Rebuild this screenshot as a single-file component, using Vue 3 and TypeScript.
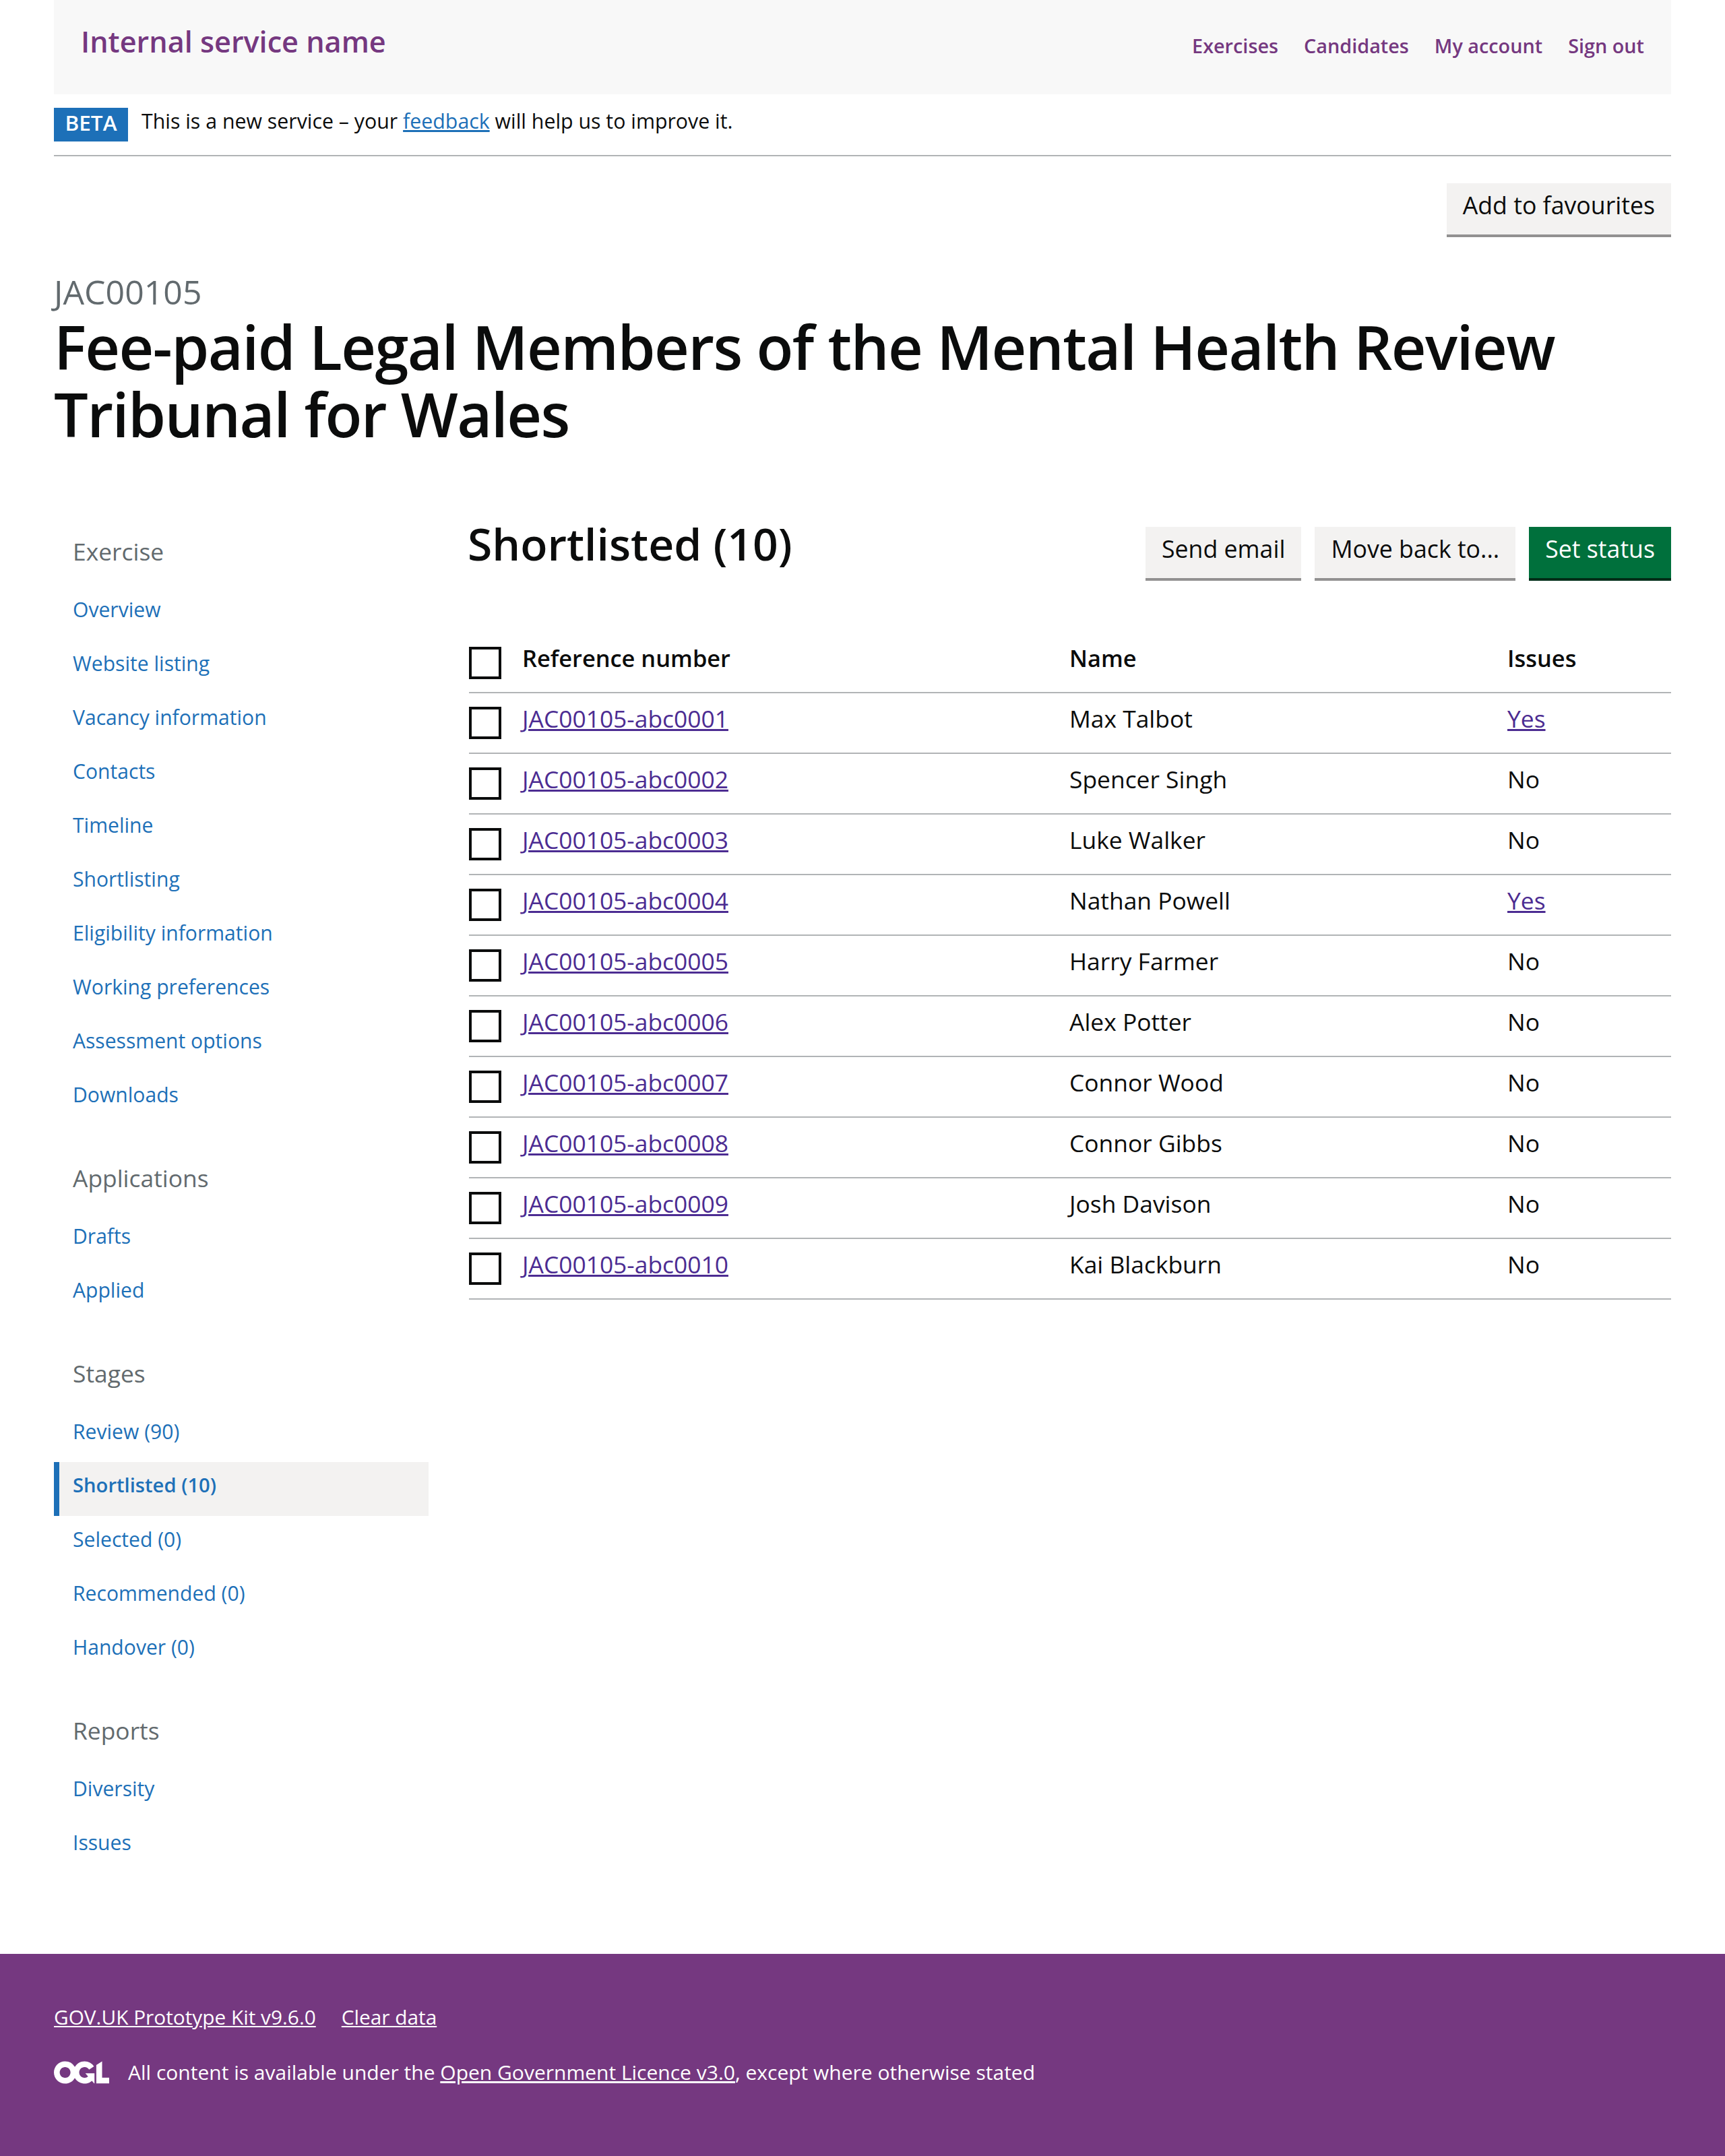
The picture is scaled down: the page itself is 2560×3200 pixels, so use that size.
<script setup lang="ts">
interface Row { ref: string; name: string; issues: boolean }
const names = ['Max Talbot','Spencer Singh','Luke Walker','Nathan Powell','Harry Farmer','Alex Potter','Connor Wood','Connor Gibbs','Josh Davison','Kai Blackburn']
const rows: Row[] = names.map((name, i) => ({
  ref: 'JAC00105-abc' + String(i + 1).padStart(4, '0'),
  name,
  issues: i === 0 || i === 3,
}))
const sections = [
  { title: 'Exercise', items: ['Overview','Website listing','Vacancy information','Contacts','Timeline','Shortlisting','Eligibility information','Working preferences','Assessment options','Downloads'] },
  { title: 'Applications', items: ['Drafts','Applied'] },
  { title: 'Stages', items: ['Review (90)','Shortlisted (10)','Selected (0)','Recommended (0)','Handover (0)'] },
  { title: 'Reports', items: ['Diversity','Issues'] },
]
const topNav = ['Exercises','Candidates','My account','Sign out']
</script>

<template>
  <div class="page">
    <div class="wrap">
      <header class="header">
        <a class="service" href="#">Internal service name</a>
        <nav class="topnav">
          <a v-for="n in topNav" :key="n" href="#">{{ n }}</a>
        </nav>
      </header>
      <div class="phase">
        <strong class="tag">BETA</strong>
        <span>This is a new service – your <a href="#">feedback</a> will help us to improve it.</span>
      </div>
      <div class="fav"><button class="btn">Add to favourites</button></div>
      <span class="caption">JAC00105</span>
      <h1 class="title">Fee-paid Legal Members of the Mental Health Review Tribunal for Wales</h1>
      <div class="columns">
        <aside class="side">
          <section v-for="s in sections" :key="s.title" class="side-sec">
            <h2>{{ s.title }}</h2>
            <a v-for="i in s.items" :key="i" href="#" :class="{ active: i === 'Shortlisted (10)' }">{{ i }}</a>
          </section>
        </aside>
        <main class="main">
          <div class="main-head">
            <h2>Shortlisted (10)</h2>
            <div class="actions">
              <button class="btn">Send email</button>
              <button class="btn">Move back to...</button>
              <button class="btn green">Set status</button>
            </div>
          </div>
          <table>
            <thead>
              <tr>
                <th class="c1"><span class="cb"></span></th>
                <th class="c2">Reference number</th>
                <th class="c3">Name</th>
                <th>Issues</th>
              </tr>
            </thead>
            <tbody>
              <tr v-for="r in rows" :key="r.ref">
                <td class="c1"><span class="cb"></span></td>
                <td class="c2"><a href="#">{{ r.ref }}</a></td>
                <td class="c3">{{ r.name }}</td>
                <td><a v-if="r.issues" href="#">Yes</a><template v-else>No</template></td>
              </tr>
            </tbody>
          </table>
        </main>
      </div>
    </div>
    <footer class="footer">
      <div class="foot-links">
        <a href="#">GOV.UK Prototype Kit v9.6.0</a>
        <a href="#">Clear data</a>
      </div>
      <div class="licence">
        <svg viewBox="0 0 483.2 195.7" width="82" height="34" aria-hidden="true"><path fill="currentColor" d="M421.5 142.8V.1l-50.7 32.3v161.1h112.4v-50.7zm-122.3-9.6A47.12 47.12 0 0 1 221 97.8c0-26 21.1-47.1 47.1-47.1 16.7 0 31.4 8.7 39.7 21.8l42.7-27.2A97.63 97.63 0 0 0 268.1 0c-36.5 0-68.3 20.1-85.1 49.7A98 98 0 0 0 97.8 0C43.9 0 0 43.9 0 97.8s43.9 97.8 97.8 97.8c36.5 0 68.3-20.1 85.1-49.7a97.76 97.76 0 0 0 149.6 25.4l19.4 22.2h3v-87.8h-80l24.3 27.5zM97.8 145c-26 0-47.1-21.1-47.1-47.1s21.1-47.1 47.1-47.1 47.2 21 47.2 47S123.8 145 97.8 145"/></svg>
        <span>All content is available under the <a href="#">Open Government Licence v3.0</a>, except where otherwise stated</span>
      </div>
    </footer>
  </div>
</template>

<style>
html, body { margin: 0; background: #fff; }
</style>

<style scoped>
.page { font-family: "Open Sans", "Noto Sans", sans-serif; color: #0b0c0c; height: 3200px; display: flex; flex-direction: column; }
.wrap { flex: 1; padding: 0 80px; }
.header { height: 140px; box-sizing: border-box; background: #f8f8f8; display: flex; justify-content: space-between; padding: 30px 40px 0; }
.service { color: #753880; font-size: 43.2px; font-weight: 600; line-height: 64px; text-decoration: none; }
.topnav { display: flex; gap: 38px; padding-top: 14px; }
.topnav a { color: #753880; font-size: 28.8px; font-weight: 600; line-height: 48px; text-decoration: none; }
.phase { height: 92px; box-sizing: border-box; padding-top: 20px; border-bottom: 2px solid #b1b4b6; display: flex; gap: 20px; font-size: 30.3px; line-height: 40px; }
.phase a { color: #1d70b8; }
.tag { background: #1d70b8; color: #fff; width: 110px; height: 50px; display: flex; align-items: center; justify-content: center; font-size: 31.5px; font-weight: 600; padding-bottom: 6px; box-sizing: border-box; }
.fav { display: flex; justify-content: flex-end; margin-top: 40px; }
.btn { font: inherit; font-size: 35.7px; line-height: 50px; border: 0; margin: 0; padding: 0 24px 16px; height: 80px; box-sizing: border-box; background: #f3f2f1; color: #0b0c0c; box-shadow: inset 0 -4px 0 #929191; }
.btn.green { background: #00703c; color: #fff; box-shadow: inset 0 -4px 0 #002d18; }
.caption { display: block; margin-top: 50px; font-size: 50px; line-height: 62px; color: #626a6e; }
.title { margin: 0; font-size: 90px; line-height: 100px; font-weight: 650; letter-spacing: -1.6px; }
.columns { display: flex; margin-top: 116px; gap: 60px; }
.side { width: 556px; flex: none; }
.side-sec { margin-bottom: 53px; }
.side-sec h2 { margin: 13px 0 27px; font-size: 35.4px; line-height: 50px; font-weight: 400; color: #626a6e; padding-left: 28px; }
.side-sec a { display: flex; align-items: center; height: 80px; padding: 0 0 12px 28px; box-sizing: border-box; color: #1d70b8; font-size: 30.1px; text-decoration: none; }
.side-sec a.active { background: #f3f2f1; border-left: 8px solid #1d70b8; padding-left: 20px; font-weight: 600; font-size: 29.2px; }
.main { flex: 1; min-width: 0; }
.main-head { display: flex; justify-content: space-between; align-items: flex-start; }
.main-head h2 { margin: -14px 0 0 -2px; font-size: 66px; line-height: 80px; font-weight: 600; }
.actions { display: flex; gap: 20px; margin-top: 2px; }
table { width: 100%; border-collapse: collapse; margin-top: 64px; table-layout: fixed; font-size: 35.4px; }
th, td { height: 90px; box-sizing: border-box; border-bottom: 2px solid #b1b4b6; text-align: left; vertical-align: top; line-height: 50px; padding: 12px 0 0; }
th { font-weight: 600; font-size: 34.4px; height: 102px; padding-top: 26px; }
.c1 { width: 79px; }
.c2 { width: 812px; }
.c3 { width: 650px; }
.cb { display: block; width: 48px; height: 48px; box-sizing: border-box; border: 4px solid #0b0c0c; margin-top: 8px; background: #fff; }
td a { color: #4c2c92; }
.footer { height: 300px; box-sizing: border-box; background: #753880; color: #fff; padding: 70px 80px 0; font-size: 29.8px; line-height: 48px; }
.footer a { color: #fff; }
.foot-links { display: flex; gap: 38px; }
.licence { display: flex; align-items: center; gap: 28px; margin-top: 34px; font-size: 30px; }
</style>
